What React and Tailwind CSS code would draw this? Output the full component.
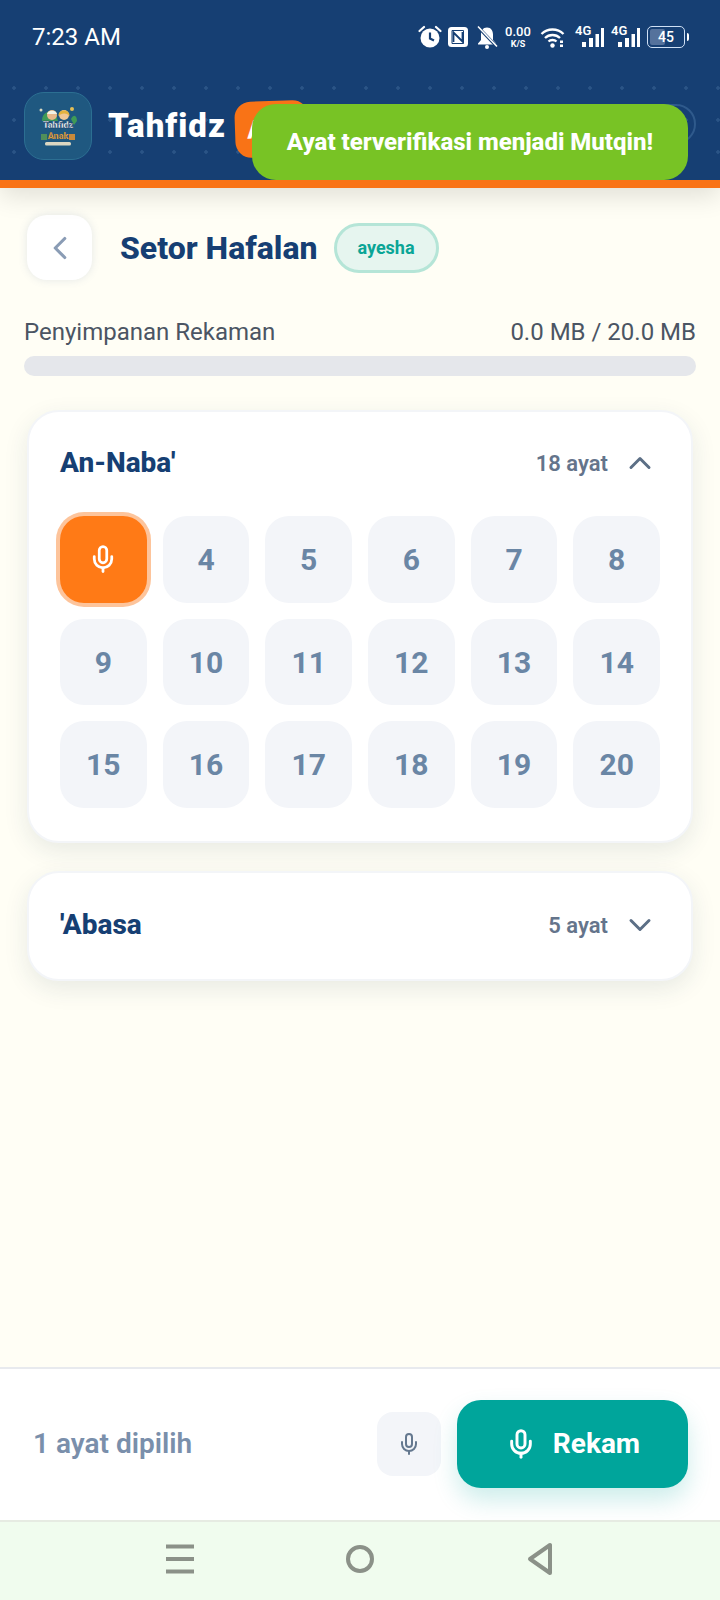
import { ChevronDown, ChevronLeft, ChevronUp, Mic } from "lucide-react";

const numbers = [4, 5, 6, 7, 8, 9, 10, 11, 12, 13, 14, 15, 16, 17, 18, 19, 20];

const StatusIcons = () => (
  <div className="flex items-center text-white">
    {/* alarm */}
    <svg width="24" height="24" viewBox="0 0 24 24">
      <circle cx="12" cy="13" r="9.5" fill="#fff" />
      <path d="M12 7.5V13.5L16 15.5" fill="none" stroke="#163f73" strokeWidth="2.2" />
      <path d="M1.5 6L6 2M22.5 6L18 2" stroke="#fff" strokeWidth="2.2" strokeLinecap="round" />
    </svg>
    {/* nfc */}
    <svg width="22" height="22" viewBox="0 0 22 22" className="ml-[5px]">
      <rect x="1" y="1" width="20" height="20" rx="3.5" fill="#fff" />
      <path d="M6.5 16V6.5L15.5 15.5V6" fill="none" stroke="#163f73" strokeWidth="1.8" />
      <path d="M11 4.5H16.5V17.5H11M11 17.5H5V4.5H11" fill="none" stroke="#163f73" strokeWidth="1" />
    </svg>
    {/* bell off */}
    <svg width="22" height="24" viewBox="0 0 22 24" className="ml-[7px]">
      <path d="M11 2.5C6.8 2.5 5 6 5 9.5V15L2 18.5V19.5H20V18.5L17 15V9.5C17 6 15.2 2.5 11 2.5Z" fill="#fff" />
      <circle cx="11" cy="22" r="2" fill="#fff" />
      <path d="M2 2L21 22" stroke="#163f73" strokeWidth="3" />
      <path d="M2 1.5L21 21.5" stroke="#fff" strokeWidth="1.6" />
    </svg>
    {/* speed */}
    <div className="ml-[6px] flex w-[28px] flex-col items-center leading-none font-medium">
      <span className="text-[13px] leading-[13px]">0.00</span>
      <span className="mt-[1px] text-[9px] leading-[10px] font-bold">K/S</span>
    </div>
    {/* wifi */}
    <svg width="25" height="22" viewBox="0 0 25 22" className="ml-[8px]">
      <path d="M1.5 8C7.5 2 17.5 2 23.5 8M5 12C9 8 16 8 20 12M8.5 15.5C10.5 13.5 14.5 13.5 16.5 15.5" fill="none" stroke="#fff" strokeWidth="2.3" />
      <circle cx="12.5" cy="19.5" r="2.2" fill="#fff" />
      <rect x="20" y="14.5" width="3" height="2.5" fill="#fff" />
      <rect x="20" y="18.5" width="3" height="2.5" fill="#fff" />
    </svg>
    {/* signal */}
    {[0, 1].map((i) => (
      <div key={i} className={`${i === 0 ? "ml-[10px]" : "ml-[7px]"} relative h-[22px] w-[29px]`}>
        <span className="absolute top-[-2px] left-0 text-[13px] leading-[14px] font-semibold">4G</span>
        <svg width="29" height="22" viewBox="0 0 29 22" className="absolute top-0 left-0">
          <rect x="7" y="16" width="4" height="5" fill="#fff" />
          <rect x="14" y="12" width="4" height="9" fill="#fff" />
          <rect x="20.5" y="8" width="3.5" height="13" fill="#fff" />
          <rect x="26" y="2" width="3" height="19" fill="#fff" />
        </svg>
      </div>
    ))}
    {/* battery */}
    <div className="relative ml-[7px] flex h-[22px] w-[38px] items-center overflow-hidden rounded-[5px] border border-[#cfe0f5]">
      <div className="absolute inset-y-[2px] left-[2px] w-[15px] rounded-[2px] bg-[#55729c]" />
      <span className="relative w-full text-center text-[14px] leading-none font-medium">45</span>
    </div>
    <div className="ml-[2px] h-[8px] w-[2px] rounded-r bg-white" />
  </div>
);

// small app logo: two kids above the wordmark
const Logo = () => (
  <div className="flex h-[68px] w-[68px] shrink-0 items-center justify-center rounded-[20px] border border-[#2c6f92] bg-[#1f5880]">
    <svg width="42" height="44" viewBox="0 0 42 44" className="font-['Roboto',sans-serif]">
      <path d="M5 17C5 8 12 8 14 6C16 8 20 8 20 14L21 17Z" fill="#3f9a57" />
      <circle cx="35" cy="5" r="2" fill="#e3bf55" />
      <circle cx="4" cy="6" r="1.5" fill="#d9d9c0" />
      <circle cx="15" cy="11" r="5" fill="#e9b98c" />
      <path d="M10 10C10.5 5.5 19.5 5.5 20 10Z" fill="#f2f2e6" />
      <circle cx="27" cy="11" r="5" fill="#f0c796" />
      <path d="M21.5 12C20.5 4.5 33.5 4.5 32.5 12C30.5 8.5 24 8.5 21.5 12Z" fill="#e3b23f" />
      <path d="M34 15C37 9 40 12 40 17L37 21Z" fill="#3f9a57" />
      <text x="21" y="24" textAnchor="middle" fontSize="9" fontWeight="900" fill="#fff" stroke="#14365f" strokeWidth="0.3">Tahfidz</text>
      <text x="21" y="35" textAnchor="middle" fontSize="9" fontWeight="900" fill="#f3a93a" stroke="#14365f" strokeWidth="0.2">Anak</text>
      <rect x="4" y="30" width="6" height="6" fill="#4f8f5a" />
      <rect x="32" y="30" width="6" height="6" fill="#c98a3a" />
      <rect x="8" y="38" width="26" height="3.5" rx="1.5" fill="#dcd7c2" />
    </svg>
  </div>
);

const AyatButton = ({ n }) => (
  <div className="flex aspect-square items-center justify-center rounded-[24px] bg-[#f3f5f9] text-[30px] font-bold text-[#6a86a5]">
    {n}
  </div>
);

const App = () => {
  return (
    <div className="relative flex h-[1600px] w-[720px] flex-col overflow-hidden bg-[#fffef5] font-['Roboto',sans-serif]">
      <header className="relative z-10 shrink-0 border-b-[8px] border-[#f97316] bg-[#163f73] bg-[radial-gradient(#2a5486_1.5px,transparent_2px)] bg-[length:32px_32px] bg-[position:-2px_8px] shadow-[0_8px_24px_rgba(0,0,0,0.12)]">
        {/* status bar */}
        <div className="flex h-[76px] items-center justify-between bg-[#163f73] pr-[31px] pb-[3px] pl-[32px]">
          <span className="text-[24px] text-white">7:23 AM</span>
          <StatusIcons />
        </div>
        {/* app bar */}
        <div className="flex h-[104px] items-start justify-between pr-[24px] pl-[24px]">
          <div className="flex items-center">
            <div className="mt-[16px]">
              <Logo />
            </div>
            <span className="mt-[16px] ml-[16px] text-[33px] font-black tracking-[1px] text-white">Tahfidz</span>
            <div className="mt-[21px] ml-[9px] flex h-[56px] w-[74px] rotate-[-2deg] items-center rounded-[16px] bg-[#f97316] pl-[12px] text-[26px] font-bold text-white">
              A
            </div>
          </div>
          <div className="mt-[28px] h-[40px] w-[86px] rounded-full border-2 border-[#2f5a8c]" />
        </div>
      </header>

      {/* toast */}
      <div className="absolute top-[104px] left-[252px] z-20 flex h-[76px] w-[436px] items-center justify-center rounded-[24px] bg-[#78c325] text-[24px] font-extrabold text-white">
        Ayat terverifikasi menjadi Mutqin!
      </div>

      <main className="flex-1">
        <div className="flex items-center pt-[27px] pl-[27px]">
          <div className="flex h-[65px] w-[65px] items-center justify-center rounded-[20px] bg-white shadow-[0_0_8px_rgba(90,110,160,0.16)]">
            <ChevronLeft size={38} strokeWidth={2} className="text-[#8a9cb5]" />
          </div>
          <h1 className="ml-[28px] text-[32px] font-extrabold text-[#163f73]">Setor Hafalan</h1>
          <div className="ml-[16px] flex h-[50px] w-[105px] items-center justify-center rounded-full border-[3px] border-[#b5e5d7] bg-[#e6f5ef] text-[18px] font-bold text-[#0aa596]">
            ayesha
          </div>
        </div>

        <div className="mt-[36px] px-[24px]">
          <div className="flex items-center justify-between text-[24px] leading-[32px] text-[#4b5563]">
            <span>Penyimpanan Rekaman</span>
            <span>0.0 MB / 20.0 MB</span>
          </div>
          <div className="mt-[8px] h-[20px] rounded-full bg-[#e5e7eb]" />
        </div>

        <section className="mx-[27px] mt-[34px] rounded-[32px] border-2 border-[#f3f5f8] bg-white px-[31px] pt-[33px] pb-[33px] shadow-[0_8px_24px_rgba(30,60,80,0.1)]">
          <div className="mb-[35px] flex h-[36px] items-center justify-between">
            <h2 className="text-[28px] font-extrabold text-[#163f73]">An-Naba'</h2>
            <div className="flex items-center gap-[14px] pr-[2px]">
              <span className="text-[22px] font-semibold text-[#64748b]">18 ayat</span>
              <ChevronUp size={36} strokeWidth={2} className="text-[#5c6f86]" />
            </div>
          </div>
          <div className="grid grid-cols-6 gap-[16px]">
            <div className="flex aspect-square items-center justify-center rounded-[24px] bg-[#ff7a16] ring-4 ring-[#fdc49b]">
              <Mic size={30} strokeWidth={2.2} className="text-white" />
            </div>
            {numbers.map((n) => (
              <AyatButton key={n} n={n} />
            ))}
          </div>
        </section>

        <section className="mx-[27px] mt-[28px] rounded-[32px] border-2 border-[#f3f5f8] bg-white px-[31px] pt-[34px] pb-[36px] shadow-[0_8px_24px_rgba(30,60,80,0.1)]">
          <div className="flex h-[36px] items-center justify-between">
            <h2 className="text-[28px] font-extrabold text-[#163f73]">'Abasa</h2>
            <div className="flex items-center gap-[14px] pr-[2px]">
              <span className="text-[22px] font-semibold text-[#64748b]">5 ayat</span>
              <ChevronDown size={36} strokeWidth={2} className="text-[#5c6f86]" />
            </div>
          </div>
        </section>
      </main>

      {/* bottom action bar */}
      <div className="flex h-[153px] shrink-0 items-center justify-between border-t-2 border-[#e8eaee] bg-white pr-[32px] pb-[2px] pl-[33px]">
        <span className="text-[28px] font-semibold text-[#7a8fab]">1 ayat dipilih</span>
        <div className="flex items-center gap-[16px]">
          <div className="flex h-[64px] w-[64px] items-center justify-center rounded-[16px] bg-[#f3f5f9]">
            <Mic size={24} strokeWidth={2} className="text-[#64788f]" />
          </div>
          <div className="flex h-[88px] w-[231px] items-center justify-center gap-[16px] rounded-[24px] bg-[#00a59b] text-[28px] font-bold text-white shadow-[0_12px_24px_rgba(0,165,155,0.2)]">
            <Mic size={32} strokeWidth={2.2} />
            Rekam
          </div>
        </div>
      </div>

      {/* android nav */}
      <div className="flex h-[80px] shrink-0 items-center justify-center gap-[152px] border-t-2 border-[#e6ebe2] bg-[#f0fcee] pb-[4px]">
        <svg width="28" height="30" viewBox="0 0 28 30">
          <path d="M0 2.5H28M0 15H28M0 27.5H28" stroke="#8b9188" strokeWidth="4" />
        </svg>
        <svg width="28" height="30" viewBox="0 0 28 30">
          <circle cx="14" cy="15" r="12" fill="none" stroke="#8b9188" strokeWidth="4" />
        </svg>
        <svg width="28" height="34" viewBox="0 0 28 34">
          <path d="M24 3V31L4 17Z" fill="none" stroke="#8b9188" strokeWidth="4" strokeLinejoin="round" />
        </svg>
      </div>
    </div>
  );
};

export default App;
